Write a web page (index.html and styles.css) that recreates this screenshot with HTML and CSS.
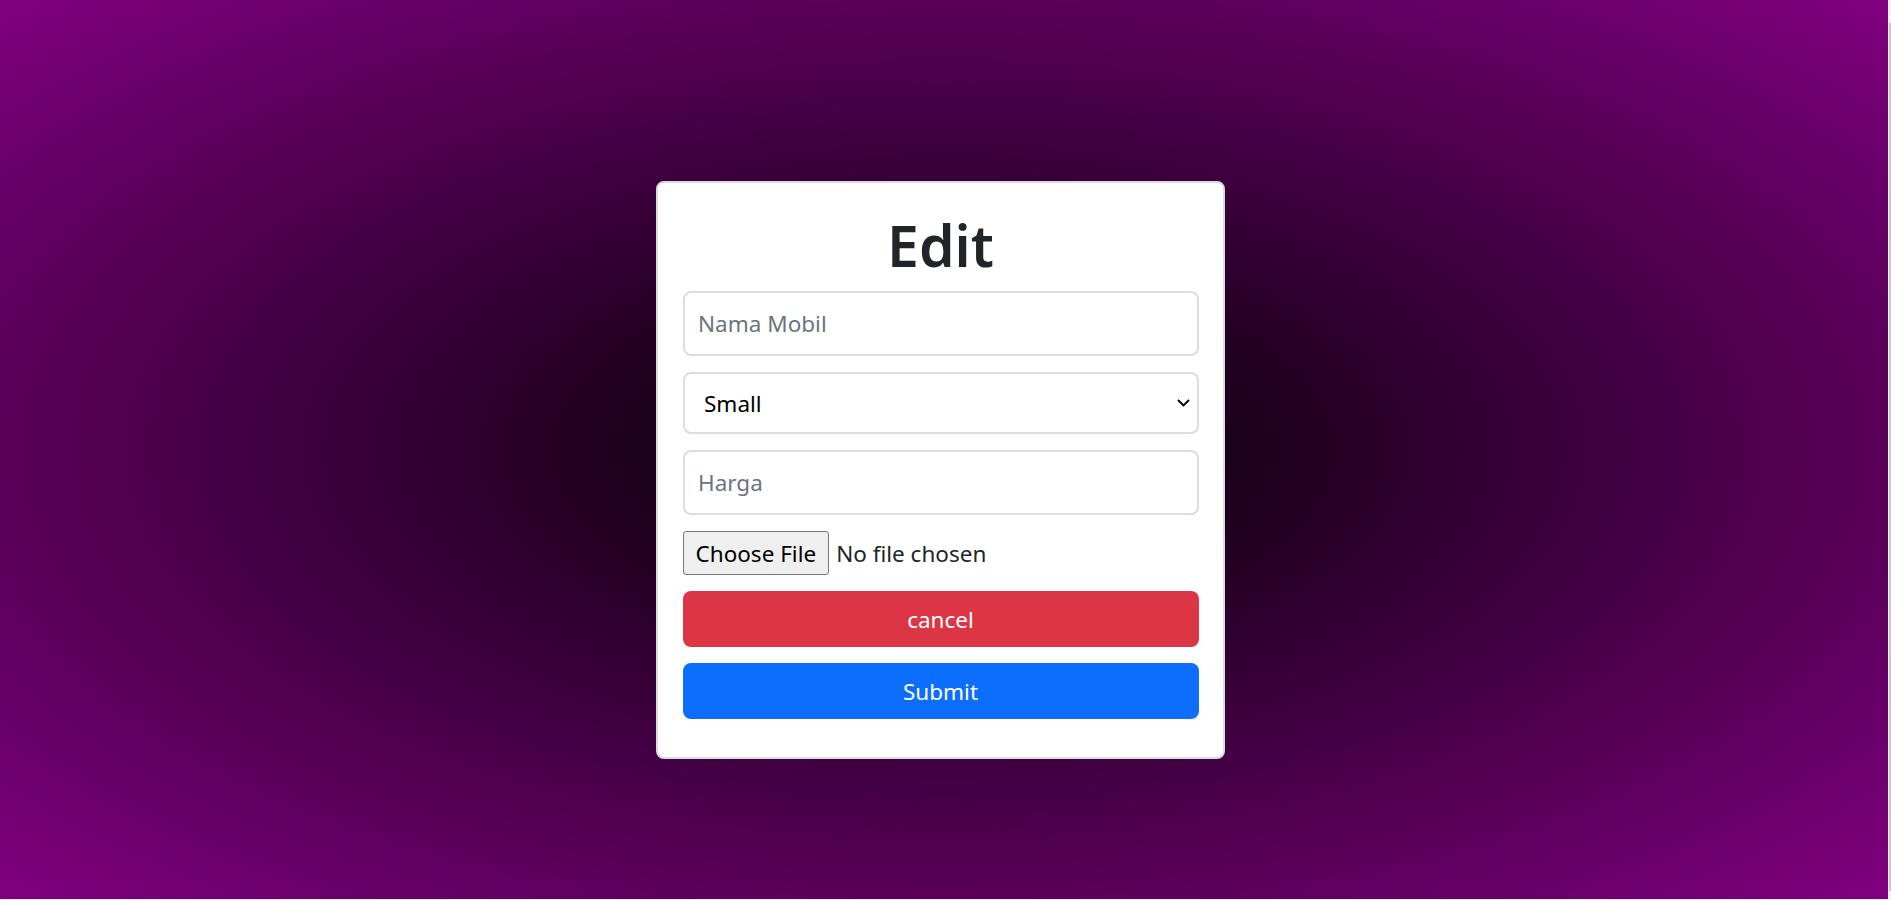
FILE: index.html
```html
<!DOCTYPE html>
<html lang="id">
<head>
<meta charset="utf-8">
<title>Edit</title>
<link rel="stylesheet" href="styles.css">
</head>
<body>
<div class="page">
  <form class="card">
    <h1 class="title">Edit</h1>
    <input class="field" type="text" placeholder="Nama Mobil">
    <div class="select-wrap">
      <select class="field select">
        <option>Small</option>
        <option>Medium</option>
        <option>Large</option>
      </select>
      <svg class="chevron" width="13" height="8" viewBox="0 0 13 8"><path d="M1 1 L6.5 6.5 L12 1" fill="none" stroke="#000" stroke-width="1.8"/></svg>
    </div>
    <input class="field" type="text" placeholder="Harga">
    <input class="file" type="file">
    <button type="button" class="btn btn-danger">cancel</button>
    <button type="submit" class="btn btn-primary">Submit</button>
  </form>
</div>
<div class="scroll-thumb"></div>
</body>
</html>
```
FILE: styles.css
```css
html {
  background: #f1f1f1;
}
body {
  margin: 0;
  font-family: "Noto Sans", "Open Sans", sans-serif;
  color: #212529;
}
.page {
  width: 1888px;
  height: 899px;
  box-sizing: border-box;
  padding-right: 7px;
  background: radial-gradient(#000000, #800080);
  display: flex;
  justify-content: center;
  align-items: flex-start;
}
.card {
  margin-top: 181px;
  width: 569px;
  box-sizing: border-box;
  background: #fff;
  border: 2.5px solid #d9dde2;
  border-radius: 8px;
  padding: 28px 24.5px 37.5px;
  display: flex;
  flex-direction: column;
  gap: 16px;
}
.title {
  margin: 0 0 -4px;
  font-size: 57px;
  font-weight: 600;
  line-height: 1.2;
  text-align: center;
  color: #212529;
}
.field {
  display: block;
  width: 100%;
  height: 65px;
  box-sizing: border-box;
  border: 2.5px solid #dadde2;
  border-radius: 8px;
  padding: 0 13.5px;
  font-family: inherit;
  font-size: 22.5px;
  color: #212529;
  background: #fff;
  outline: none;
}
.field::placeholder {
  color: #6c757d;
}
.select-wrap {
  position: relative;
}
.select {
  height: 62px;
  appearance: none;
  -webkit-appearance: none;
  padding-left: 19.5px;
  color: #000;
}
.chevron {
  position: absolute;
  right: 9px;
  top: 27px;
  pointer-events: none;
}
.file {
  font-family: inherit;
  font-size: 22.5px;
  color: #212529;
  height: 44px;
}
.file::file-selector-button {
  font-family: inherit;
  font-size: 22.5px;
  height: 44px;
  padding: 0 12px;
  margin-right: 7px;
  border: 1px solid #767676;
  border-radius: 3px;
  background: #efefef;
  color: #000;
}
.btn {
  display: block;
  width: 100%;
  height: 56px;
  border: 0;
  border-radius: 8px;
  font-family: inherit;
  font-size: 22.5px;
  color: #fff;
}
.btn-danger {
  background: #dc3545;
}
.btn-primary {
  background: #0d6efd;
}
.scroll-thumb {
  position: fixed;
  left: 1889px;
  top: 23px;
  width: 2px;
  height: 868px;
  background: #c8c8c8;
}
```
